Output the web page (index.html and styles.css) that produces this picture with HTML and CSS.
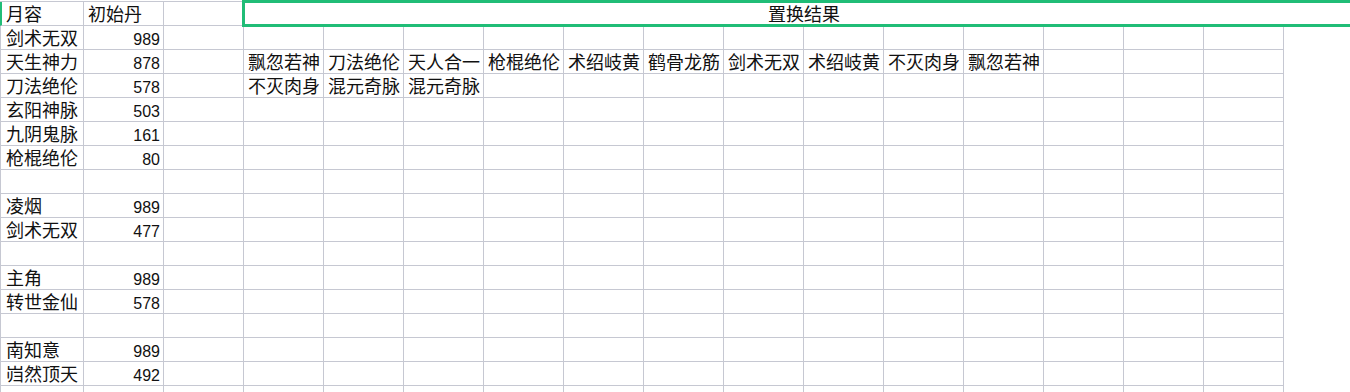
FILE: index.html
```html
<!DOCTYPE html>
<html lang="zh-CN">
<head>
<meta charset="utf-8">
<title>置换结果</title>
<link rel="stylesheet" href="styles.css">
</head>
<body>
<table class="sheet">
<colgroup>
<col class="col-a"><col class="col-b"><col class="col-c">
<col><col><col><col><col><col><col><col><col><col><col><col><col><col>
</colgroup>
<tbody>
<tr><td class="a sel-row">月容</td><td>初始丹</td><td></td><td colspan="14" class="merge">置换结果</td></tr>
<tr><td class="a">剑术无双</td><td class="n">989</td><td></td><td></td><td></td><td></td><td></td><td></td><td></td><td></td><td></td><td></td><td></td><td></td><td></td><td></td></tr>
<tr><td class="a">天生神力</td><td class="n">878</td><td></td><td>飘忽若神</td><td>刀法绝伦</td><td>天人合一</td><td>枪棍绝伦</td><td>术绍岐黄</td><td>鹤骨龙筋</td><td>剑术无双</td><td>术绍岐黄</td><td>不灭肉身</td><td>飘忽若神</td><td></td><td></td><td></td></tr>
<tr><td class="a">刀法绝伦</td><td class="n">578</td><td></td><td>不灭肉身</td><td>混元奇脉</td><td>混元奇脉</td><td></td><td></td><td></td><td></td><td></td><td></td><td></td><td></td><td></td><td></td></tr>
<tr><td class="a">玄阳神脉</td><td class="n">503</td><td></td><td></td><td></td><td></td><td></td><td></td><td></td><td></td><td></td><td></td><td></td><td></td><td></td><td></td></tr>
<tr><td class="a">九阴鬼脉</td><td class="n">161</td><td></td><td></td><td></td><td></td><td></td><td></td><td></td><td></td><td></td><td></td><td></td><td></td><td></td><td></td></tr>
<tr><td class="a">枪棍绝伦</td><td class="n">80</td><td></td><td></td><td></td><td></td><td></td><td></td><td></td><td></td><td></td><td></td><td></td><td></td><td></td><td></td></tr>
<tr><td class="a"></td><td></td><td></td><td></td><td></td><td></td><td></td><td></td><td></td><td></td><td></td><td></td><td></td><td></td><td></td><td></td></tr>
<tr><td class="a">凌烟</td><td class="n">989</td><td></td><td></td><td></td><td></td><td></td><td></td><td></td><td></td><td></td><td></td><td></td><td></td><td></td><td></td></tr>
<tr><td class="a">剑术无双</td><td class="n">477</td><td></td><td></td><td></td><td></td><td></td><td></td><td></td><td></td><td></td><td></td><td></td><td></td><td></td><td></td></tr>
<tr><td class="a"></td><td></td><td></td><td></td><td></td><td></td><td></td><td></td><td></td><td></td><td></td><td></td><td></td><td></td><td></td><td></td></tr>
<tr><td class="a">主角</td><td class="n">989</td><td></td><td></td><td></td><td></td><td></td><td></td><td></td><td></td><td></td><td></td><td></td><td></td><td></td><td></td></tr>
<tr><td class="a">转世金仙</td><td class="n">578</td><td></td><td></td><td></td><td></td><td></td><td></td><td></td><td></td><td></td><td></td><td></td><td></td><td></td><td></td></tr>
<tr><td class="a"></td><td></td><td></td><td></td><td></td><td></td><td></td><td></td><td></td><td></td><td></td><td></td><td></td><td></td><td></td><td></td></tr>
<tr><td class="a">南知意</td><td class="n">989</td><td></td><td></td><td></td><td></td><td></td><td></td><td></td><td></td><td></td><td></td><td></td><td></td><td></td><td></td></tr>
<tr><td class="a">岿然顶天</td><td class="n">492</td><td></td><td></td><td></td><td></td><td></td><td></td><td></td><td></td><td></td><td></td><td></td><td></td><td></td><td></td></tr>
<tr><td class="a"></td><td></td><td></td><td></td><td></td><td></td><td></td><td></td><td></td><td></td><td></td><td></td><td></td><td></td><td></td><td></td></tr>
</tbody>
</table>
</body>
</html>
```
FILE: styles.css
```css
html, body {
  margin: 0;
  padding: 0;
  background: #ffffff;
  overflow: hidden;
}

.sheet {
  margin-top: 1px;
  table-layout: fixed;
  border-collapse: separate;
  border-spacing: 0;
  width: 1364px;
  border-top: 1px solid #c6c8d2;
  font-family: "Noto Sans CJK SC", "Liberation Sans", sans-serif;
  font-size: 18px;
  color: #111111;
}

.sheet col { width: 80px; }
.sheet .col-a { width: 84px; }

.sheet td {
  height: 23px;
  padding: 0 3px 0 4px;
  border-right: 1px solid #c6c8d2;
  border-bottom: 1px solid #c6c8d2;
  line-height: 23px;
  vertical-align: bottom;
  white-space: nowrap;
}

.sheet td.a {
  border-left: 1px solid #c6c8d2;
  padding-left: 5px;
}

.sheet td.sel-row {
  border-left: 2px solid #20bd77;
  padding-left: 4px;
}

.sheet td.n {
  font-family: "Liberation Sans", sans-serif;
  font-size: 16px;
  line-height: 19px;
  text-align: right;
}

.sheet td.merge {
  position: relative;
  text-align: center;
}

.sheet td.merge::after {
  content: "";
  position: absolute;
  left: -2px;
  top: -2px;
  right: -4px;
  bottom: -2px;
  border: 3px solid #20bd77;
  pointer-events: none;
}
```
